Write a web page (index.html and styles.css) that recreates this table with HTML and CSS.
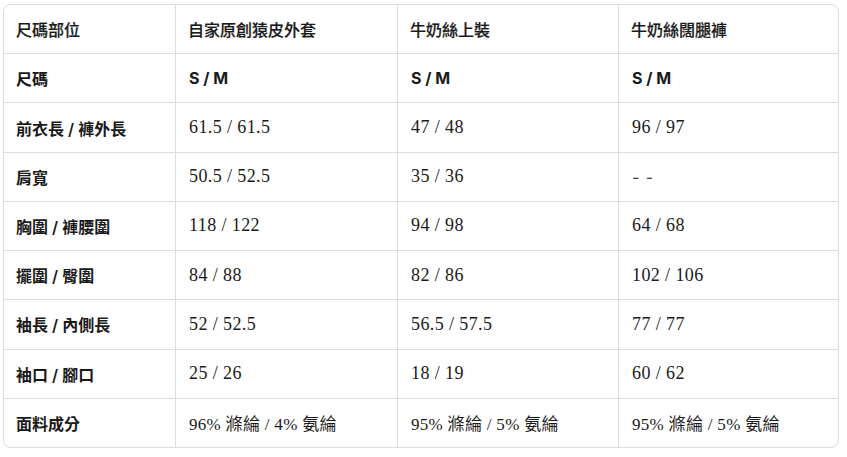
FILE: index.html
```html
<!DOCTYPE html>
<html lang="zh-Hant">
<head>
<meta charset="utf-8">
<link rel="stylesheet" href="styles.css">
</head>
<body>
<div class="table">
  <div class="cell head">尺碼部位</div>
  <div class="cell head">自家原創猿皮外套</div>
  <div class="cell head">牛奶絲上裝</div>
  <div class="cell head">牛奶絲闊腿褲</div>

  <div class="cell first">尺碼</div>
  <div class="cell size">S / M</div>
  <div class="cell size">S / M</div>
  <div class="cell size">S / M</div>

  <div class="cell first">前衣長 / 褲外長</div>
  <div class="cell num">61.5 / 61.5</div>
  <div class="cell num">47 / 48</div>
  <div class="cell num">96 / 97</div>

  <div class="cell first">肩寬</div>
  <div class="cell num">50.5 / 52.5</div>
  <div class="cell num">35 / 36</div>
  <div class="cell dash">- -</div>

  <div class="cell first">胸圍 / 褲腰圍</div>
  <div class="cell num">118 / 122</div>
  <div class="cell num">94 / 98</div>
  <div class="cell num">64 / 68</div>

  <div class="cell first">擺圍 / 臀圍</div>
  <div class="cell num">84 / 88</div>
  <div class="cell num">82 / 86</div>
  <div class="cell num">102 / 106</div>

  <div class="cell first">袖長 / 內側長</div>
  <div class="cell num">52 / 52.5</div>
  <div class="cell num">56.5 / 57.5</div>
  <div class="cell num">77 / 77</div>

  <div class="cell first">袖口 / 腳口</div>
  <div class="cell num">25 / 26</div>
  <div class="cell num">18 / 19</div>
  <div class="cell num">60 / 62</div>

  <div class="cell first">面料成分</div>
  <div class="cell num mix">96% 滌綸 / 4% 氨綸</div>
  <div class="cell num mix">95% 滌綸 / 5% 氨綸</div>
  <div class="cell num mix">95% 滌綸 / 5% 氨綸</div>
</div>
</body>
</html>
```

FILE: styles.css
```css
* { box-sizing: border-box; }
html, body { margin: 0; padding: 0; background: #ffffff; }
body {
  padding: 4px 0 0 3px;
  font-family: Inter, "Noto Sans CJK TC", sans-serif;
  color: #1a1a1a;
}
.table {
  width: 836px;
  height: 444px;
  border: 1px solid #dcdce1;
  border-radius: 8px;
  overflow: hidden;
  background: #dcdce1;
  display: grid;
  grid-template-columns: 171px 221px 220px 1fr;
  grid-template-rows: repeat(9, 1fr);
  gap: 1px;
}
.cell {
  background: #ffffff;
  display: flex;
  align-items: center;
  padding-left: 12px;
  font-size: 16px;
  white-space: pre;
}
.head {
  font-weight: 500;
  -webkit-text-stroke: 0.2px currentColor;
}
.first { font-weight: 600; }
.size { font-weight: 700; padding-left: 13px; }
.num {
  font-family: "Liberation Serif", "Noto Sans CJK TC", serif;
  font-size: 18px;
  letter-spacing: 0.4px;
  padding-left: 13px;
}
.mix {
  font-size: 17px;
  letter-spacing: 0.3px;
}
.dash {
  color: #444;
  padding-left: 13px;
  letter-spacing: 1px;
}
```
